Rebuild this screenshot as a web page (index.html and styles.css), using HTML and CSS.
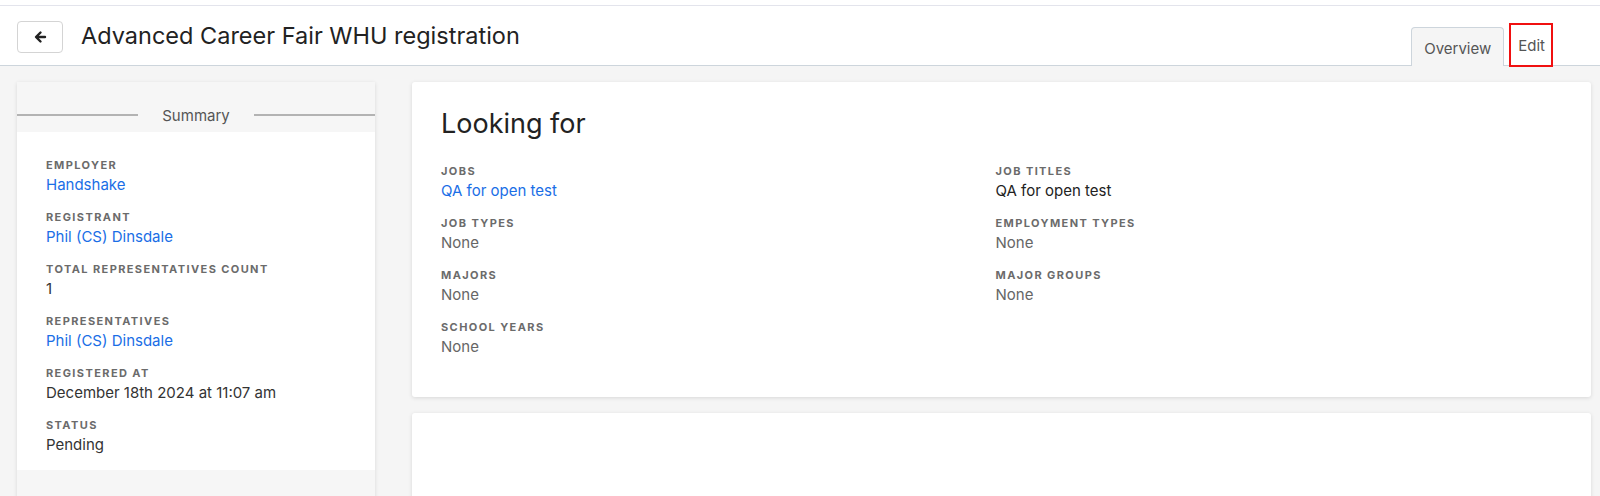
FILE: index.html
```html
<!DOCTYPE html>
<html lang="en">
<head>
  <meta charset="UTF-8">
  <meta name="viewport" content="width=device-width, initial-scale=1.0">
  <title>Advanced Career Fair WHU registration</title>
  <link rel="stylesheet" href="styles.css">
</head>
<body>
  <div class="topline"></div>
  <header class="header">
    <div class="header-left">
      <button class="back-btn" aria-label="Back">
        <svg width="14" height="14" viewBox="0 0 14 14">
          <path d="M12 7H3.5M7.5 2.5L3 7l4.5 4.5" fill="none" stroke="#222" stroke-width="2.4" stroke-linecap="round" stroke-linejoin="round"/>
        </svg>
      </button>
      <h1 class="title">Advanced Career Fair WHU registration</h1>
    </div>
    <nav class="tabs">
      <a class="tab active">Overview</a>
      <a class="tab edit">Edit</a>
    </nav>
  </header>

  <main class="page">
    <aside class="summary">
      <div class="summary-head"><span>Summary</span></div>
      <div class="summary-body">
        <div class="field">
          <div class="label">Employer</div>
          <a class="value link">Handshake</a>
        </div>
        <div class="field">
          <div class="label">Registrant</div>
          <a class="value link">Phil (CS) Dinsdale</a>
        </div>
        <div class="field">
          <div class="label">Total representatives count</div>
          <div class="value">1</div>
        </div>
        <div class="field">
          <div class="label">Representatives</div>
          <a class="value link">Phil (CS) Dinsdale</a>
        </div>
        <div class="field">
          <div class="label">Registered at</div>
          <div class="value">December 18th 2024 at 11:07 am</div>
        </div>
        <div class="field">
          <div class="label">Status</div>
          <div class="value">Pending</div>
        </div>
      </div>
      <div class="summary-foot"></div>
    </aside>

    <section class="content">
      <div class="card">
        <h2 class="card-title">Looking for</h2>
        <div class="columns">
          <div class="col">
            <div class="field">
              <div class="label">Jobs</div>
              <a class="value link">QA for open test</a>
            </div>
            <div class="field">
              <div class="label">Job types</div>
              <div class="value muted">None</div>
            </div>
            <div class="field">
              <div class="label">Majors</div>
              <div class="value muted">None</div>
            </div>
            <div class="field">
              <div class="label">School years</div>
              <div class="value muted">None</div>
            </div>
          </div>
          <div class="col">
            <div class="field">
              <div class="label">Job titles</div>
              <div class="value dark">QA for open test</div>
            </div>
            <div class="field">
              <div class="label">Employment types</div>
              <div class="value muted">None</div>
            </div>
            <div class="field">
              <div class="label">Major groups</div>
              <div class="value muted">None</div>
            </div>
          </div>
        </div>
      </div>
      <div class="card card-empty"></div>
    </section>
  </main>
</body>
</html>
```

FILE: styles.css
```css
body {
  margin: 0;
  background-color: #f5f5f5;
  font-family: 'Inter', 'Liberation Sans', sans-serif;
  color: #333;
  overflow: hidden;
}

.topline {
  height: 5px;
  background-color: #fff;
  border-bottom: 1px solid #e3e4ec;
}

.header {
  display: flex;
  justify-content: space-between;
  height: 59px;
  padding: 0 47px 0 17px;
  background-color: #fff;
  border-bottom: 1px solid #cdd5dc;
}

.header-left {
  display: flex;
  align-items: center;
  gap: 18px;
}

.back-btn {
  display: flex;
  align-items: center;
  justify-content: center;
  width: 46px;
  height: 32px;
  margin-top: 3px;
  padding: 0;
  background-color: #fff;
  border: 1px solid #d4d4d4;
  border-radius: 4px;
  cursor: pointer;
}

.title {
  margin: 0;
  font-size: 23.5px;
  font-weight: 400;
  color: #222;
}

.tabs {
  display: flex;
  align-items: flex-end;
  gap: 5px;
}

.tab {
  display: flex;
  align-items: center;
  font-size: 15px;
  color: #555;
  cursor: pointer;
}

.tab.active {
  height: 36px;
  padding: 0 12px;
  margin-bottom: -1px;
  background-color: #f5f5f5;
  border: 1px solid #cdd5dc;
  border-bottom: none;
  border-radius: 4px 4px 0 0;
  padding-top: 2px;
}

.tab.edit {
  height: 40px;
  padding: 0 6px 0 7px;
  margin-bottom: -2px;
  border: 2px solid #f01010;
}

.page {
  display: flex;
  align-items: flex-start;
  gap: 37px;
  padding: 16px 9px 0 17px;
}

.summary {
  flex: 0 0 358px;
  background-color: #fff;
  box-shadow: 0 1px 4px rgba(0, 0, 0, 0.12);
}

.summary-head {
  display: flex;
  align-items: center;
  gap: 24px;
  height: 50px;
  padding-top: 16px;
  box-sizing: border-box;
  background-color: #f6f6f6;
  font-size: 15px;
  color: #555;
}

.summary-head::before,
.summary-head::after {
  content: '';
  flex: 1;
  height: 2px;
  background-color: #b3b3b3;
}

.summary-body {
  padding: 25px 29px 15px;
}

.summary-foot {
  height: 60px;
  background-color: #f6f6f6;
}

.field + .field {
  margin-top: 14px;
}

.label {
  font-size: 11px;
  line-height: 16px;
  font-weight: 700;
  letter-spacing: 1.4px;
  text-transform: uppercase;
  color: #6b6b6b;
}

.value {
  display: block;
  margin-top: 2px;
  font-size: 15px;
  line-height: 20px;
  color: #333;
}

.link {
  color: #1a6ee6;
  text-decoration: none;
  cursor: pointer;
}

.muted {
  color: #666;
}

.dark {
  color: #222;
}

.content {
  flex: 1;
  display: flex;
  flex-direction: column;
  gap: 16px;
}

.card {
  background-color: #fff;
  border-radius: 3px;
  box-shadow: 0 1px 4px rgba(0, 0, 0, 0.12);
  padding: 25px 41px 40px 29px;
}

.card-title {
  margin: 0 0 22px;
  font-size: 27px;
  line-height: 34px;
  font-weight: 400;
  color: #222;
}

.columns {
  display: grid;
  grid-template-columns: 1fr 1fr;
}

.card-empty {
  height: 200px;
}
```
